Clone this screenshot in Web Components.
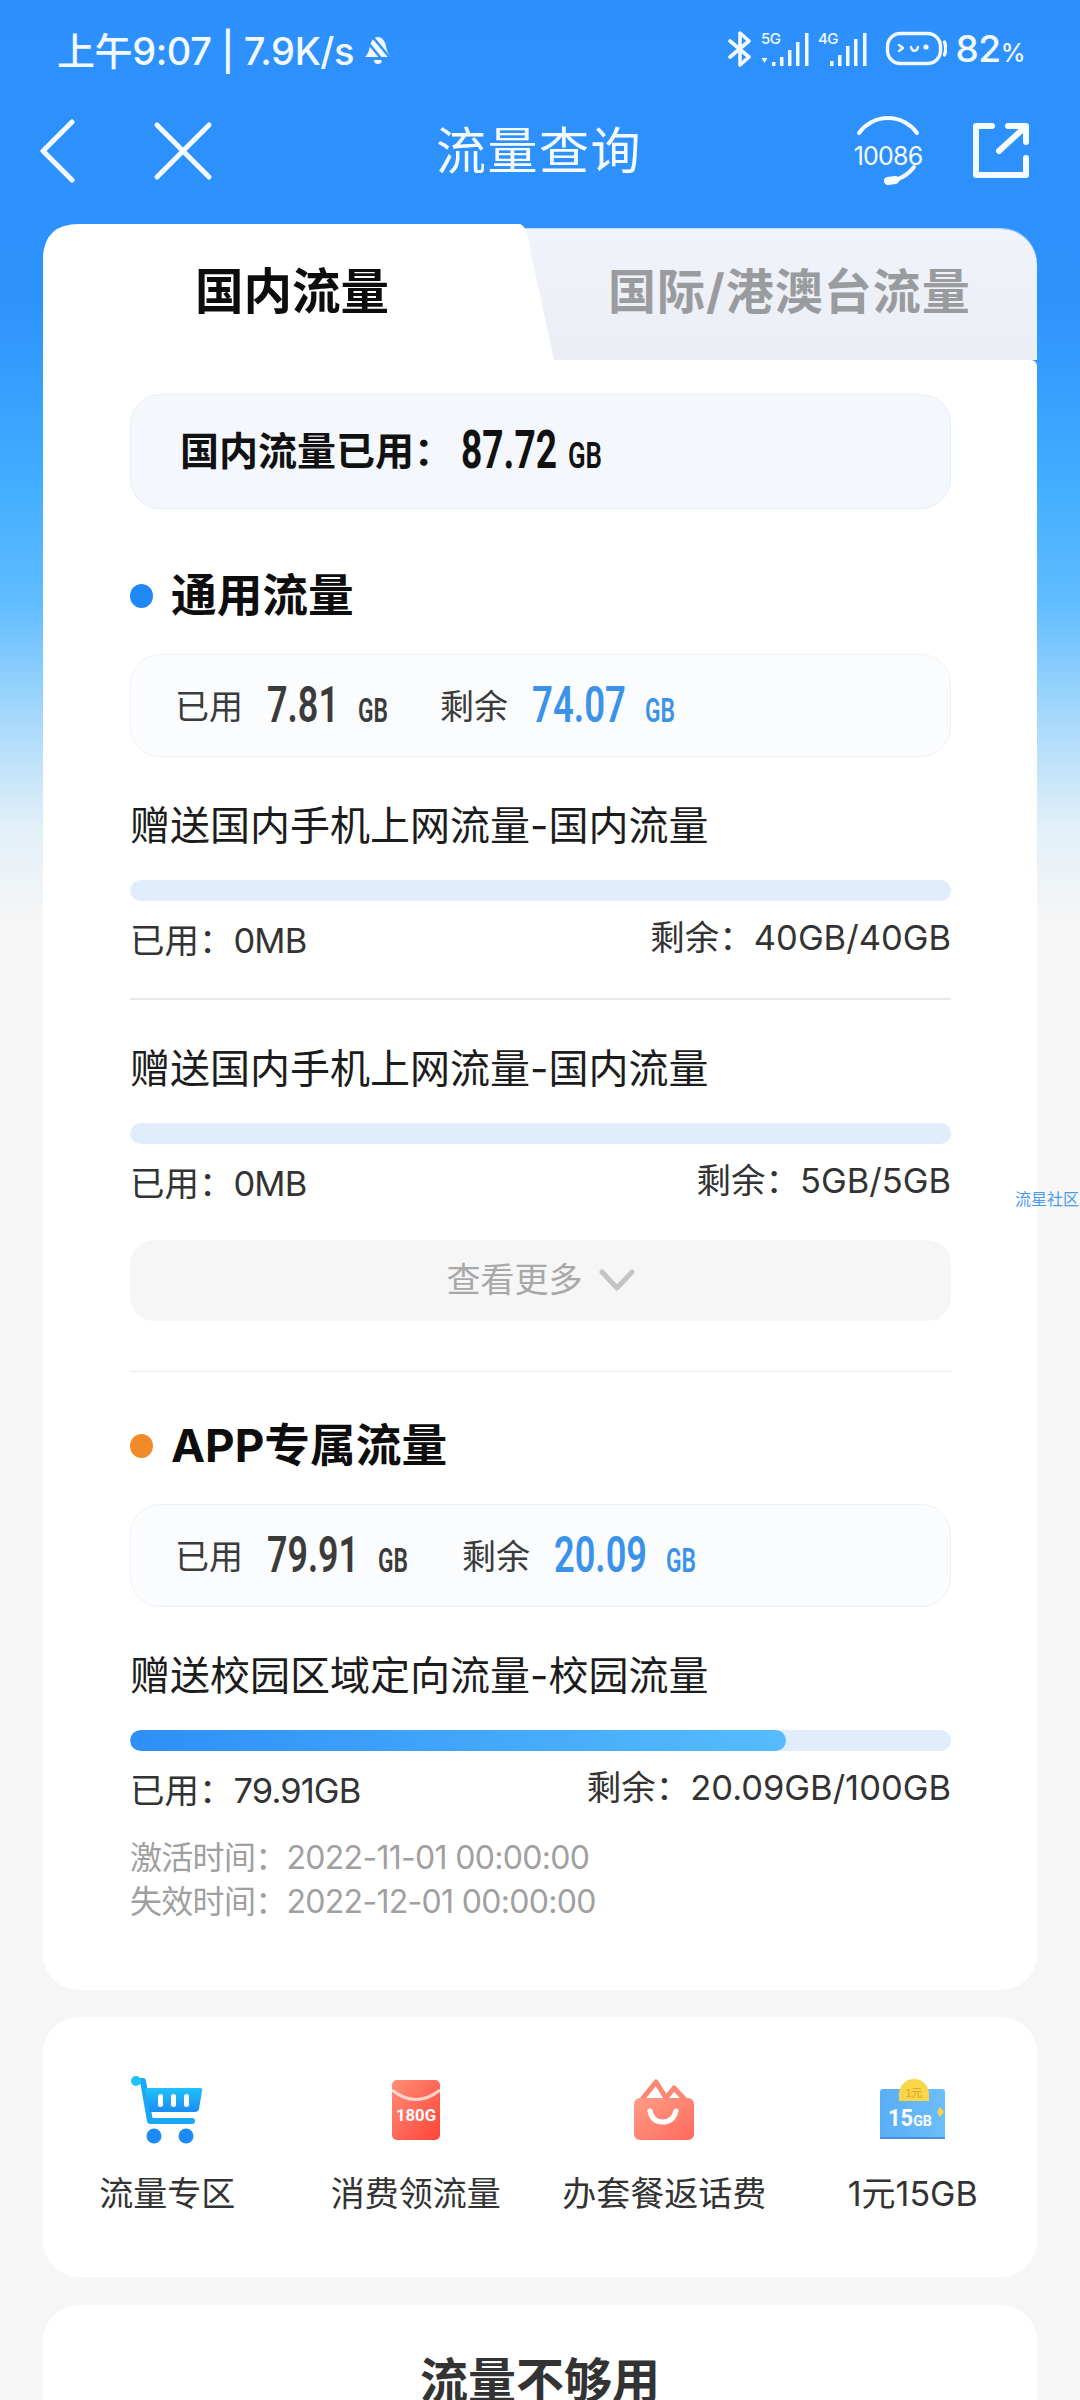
<!DOCTYPE html>
<html lang="zh"><head><meta charset="utf-8"><title>流量查询</title>
<style>
html,body{margin:0;height:2400px;overflow:hidden}
body{background:linear-gradient(180deg,#2d90fd 0,#2e92fd 300px,#41adff 480px,#5fbcff 600px,#a8d9fb 720px,#e3f0f8 830px,#f6f6f6 920px);font-family:Inter,"Noto Sans CJK SC",sans-serif;position:relative}
</style></head><body>
<page-shell>
<status-bar></status-bar>
<nav-bar></nav-bar>
<traffic-tabs></traffic-tabs>
<main-card>
  <summary-box></summary-box>
  <section-title color="#1f88f5">通用流量</section-title>
  <usage-box used="7.81" uw="72" left="74.07" lw="94" lm="52"></usage-box>
  <flow-item name="赠送国内手机上网流量-国内流量" used="0MB" rest="40GB/40GB" pct="0" line></flow-item>
  <flow-item name="赠送国内手机上网流量-国内流量" used="0MB" rest="5GB/5GB" pct="0"></flow-item>
  <more-button></more-button>
  <thin-rule></thin-rule>
  <section-title color="#f28a2a" class="app">APP专属流量</section-title>
  <usage-box used="79.91" uw="92" left="20.09" lw="93" lm="54"></usage-box>
  <flow-item name="赠送校园区域定向流量-校园流量" used="79.91GB" rest="20.09GB/100GB" pct="79.9"></flow-item>
  <date-lines></date-lines>
</main-card>
<quick-card></quick-card>
<more-card></more-card>
</page-shell>
<side-tag>流星社区</side-tag>
<script>
const def=(name,css,html)=>customElements.define(name,class extends HTMLElement{
  connectedCallback(){
    if(this.shadowRoot)return;
    const a=n=>this.getAttribute(n)??'';
    this.attachShadow({mode:'open'}).innerHTML=`<style>:host{box-sizing:border-box}*{box-sizing:border-box}${css}</style>${typeof html==='function'?html(a,this):html}`;
  }});
const CJK='Inter,"Noto Sans CJK SC",sans-serif';

/* condensed numerals: laid out at the measured width w, squeezed with scaleX */
customElements.define('din-num',class extends HTMLElement{
  connectedCallback(){
    if(this.shadowRoot)return;
    const s=this.getAttribute('s'),w=+this.getAttribute('w');
    const r=this.attachShadow({mode:'open'});
    r.innerHTML=`<style>:host{display:inline-block;width:${w}px;font:${this.getAttribute('fw')||600} ${s}px/1 Roboto,sans-serif;color:${this.getAttribute('c')||'inherit'};white-space:nowrap}
      span{display:inline-block;transform-origin:0 50%}</style><span><slot></slot></span>`;
    const sp=r.querySelector('span');
    sp.style.transform=`scaleX(${w/sp.getBoundingClientRect().width})`;
  }});

def('page-shell',`:host{display:block;width:1080px}`,`<slot></slot>`);

def('status-bar',`:host{display:flex;align-items:center;height:100px;padding:0 55px 3px 57px;color:#f2f9ff;font:500 38px ${CJK}}
 .t{letter-spacing:-.4px;white-space:nowrap}.l{display:flex;align-items:center;gap:9px;flex:1}
 .r{display:flex;align-items:center}
 .p{font-size:37px;letter-spacing:-.5px;margin-left:9px;white-space:nowrap}.p small{font-size:25px}
 svg{display:block}`,
`<div class="l"><span class="t">上午9:07 | 7.9K/s</span>
 <svg width="30" height="32" viewBox="0 0 30 32"><path d="M2 24c3-3 4-6 5-11 1-5 4-9 8-9s7 4 8 9c1 5 2 8 5 11z" fill="#f2f9ff"/><path d="M11 27a4 4 0 0 0 8 0z" fill="#f2f9ff"/><path d="M8 2 28 26M2 6 21 29" stroke="#2d90fd" stroke-width="2.4"/></svg></div>
 <div class="r">
 <svg width="26" height="38" viewBox="0 0 26 38" fill="none" stroke="#f2f9ff" stroke-width="3.6" stroke-linejoin="round" stroke-linecap="round"><path d="M3 11 22 27 13 35V3l9 8L3 27"/></svg>
 <svg width="52" height="38" viewBox="0 0 52 38" style="margin-left:8px" fill="#f2f9ff"><text x="0" y="14" font-size="15" font-family="Inter" font-weight="500" letter-spacing="-.5">5G</text><path d="M.500 28h6l-3 5z"/><rect x="11" y="32" width="3.500" height="4"/><rect x="19" y="27" width="3.500" height="9"/><rect x="27" y="20" width="3.500" height="16"/><rect x="35" y="12" width="3.500" height="24"/><rect x="44" y="3" width="3.500" height="33"/></svg>
 <svg width="52" height="38" viewBox="0 0 52 38" style="margin-left:5px" fill="#f2f9ff"><text x="0" y="14" font-size="15" font-family="Inter" font-weight="500" letter-spacing="-.5">4G</text><rect x="12" y="31" width="3.500" height="5"/><rect x="20" y="25" width="3.500" height="11"/><rect x="28" y="16" width="3.500" height="20"/><rect x="36" y="9" width="3.500" height="27"/><rect x="45" y="3" width="3.500" height="33"/></svg>
 <svg width="62" height="38" viewBox="0 0 62 38" style="margin-left:15px" fill="none" stroke="#f2f9ff" stroke-width="3.400"><rect x="2.500" y="3.500" width="53" height="30" rx="13"/><path d="M59.500 12c1.500 4 1.500 9 0 13" stroke-linecap="round"/><path d="M14 15l4 3-4 3M26 17c.8 5 6 5 7 0" stroke-width="2.400" stroke-linecap="round" stroke-linejoin="round"/><circle cx="41" cy="17" r="2.600" fill="#f2f9ff" stroke="none"/></svg>
 <span class="p">82<small>%</small></span></div>`);

def('nav-bar',`:host{display:grid;grid-template-columns:1fr auto 1fr;align-items:center;height:124px;padding:0 48px 22px 40px;color:#f6fbff}
 .l,.r{display:flex;align-items:center}.r{justify-content:flex-end;gap:44px}.l{gap:77px}
 h1{margin:0 0 0 6px;font:400 50px/60px ${CJK};letter-spacing:1.500px}svg{display:block}`,
`<div class="l"><svg width="36" height="66" viewBox="0 0 36 66" fill="none" stroke="#f6fbff" stroke-width="5" stroke-linecap="round" stroke-linejoin="round"><path d="M32 4 3 33 32 62"/></svg>
 <svg width="60" height="60" viewBox="0 0 60 60" stroke="#f6fbff" stroke-width="5" stroke-linecap="round"><path d="M4 4 56 56M56 4 4 56"/></svg></div>
 <h1>流量查询</h1>
 <div class="r"><svg width="76" height="72" viewBox="0 0 76 72" fill="none" stroke="#f6fbff" stroke-width="4" stroke-linecap="round"><path d="M9 18A35.500 35.500 0 0 1 67 18M64 52A35.500 35.500 0 0 1 45 65"/><path d="M38 66 45 65" stroke-width="8"/><text x="38" y="50" text-anchor="middle" font-size="25" font-family="Inter" fill="#f6fbff" stroke="none" letter-spacing="-.8">10086</text></svg>
 <svg width="62" height="62" viewBox="0 0 62 62" fill="none" stroke="#f6fbff" stroke-width="6" stroke-linejoin="round" stroke-linecap="round"><path d="M22 6H6V55H56V38M38 6H56V22M54 8 29 31"/></svg></div>`);

def('traffic-tabs',`:host{display:block;position:relative;width:994px;height:136px;margin-left:43px}
 .g{position:absolute;inset:5px 0 0 0;background:linear-gradient(#f0f3f9,#ebeef5);border-radius:30px 36px 0 0;box-shadow:0 -1px 0 #b7dbf6}
 svg{position:absolute;left:0;top:0}
 .row{position:relative;display:flex;align-items:center;height:136px;font:700 48px/60px ${CJK};white-space:nowrap}
 .a{margin-left:152px;font-size:48.500px;color:#0d0d0d}.b{margin-left:219px;color:#9a9b9e;letter-spacing:1px}`,
`<div class="g"></div><svg width="994" height="136" viewBox="0 0 994 136"><path d="M0 136V36Q0 0 36 0H477Q485 2 488 30L511 136Z" fill="#fff"/></svg>
 <div class="row"><span class="a">国内流量</span><span class="b">国际/港澳台流量</span></div>`);

def('main-card',`:host{display:flex;flex-direction:column;width:994px;margin-left:43px;padding:34px 86px 66px 87px;background:#fff;border-radius:0 6px 36px 36px}`,`<slot></slot>`);

def('summary-box',`:host{display:block;height:115px;padding:0 0 0 49px;background:#f4f8fd;border:1.5px solid #e6eef7;border-radius:30px;font:700 39px/112px ${CJK};color:#111;white-space:nowrap}
 din-num{vertical-align:-3px}`,
`国内流量已用：<din-num s="53" w="96" style="margin-left:8px" fw="700">87.72</din-num><din-num s="37" w="34" style="margin-left:11px">GB</din-num>`);

def('section-title',`:host{display:flex;align-items:center;height:60px;margin-top:57px;font:700 45.700px/60px ${CJK};color:#0d0d0d;white-space:nowrap}
 :host(.app){margin-top:44px}
 i{width:23px;height:24px;border-radius:50%;margin-right:18px;flex:none}`,
 a=>`<i style="background:${a('color')}"></i><slot></slot>`);

def('usage-box',`:host{display:block;height:103px;margin-top:28px;padding-left:44px;background:#fafcfe;border:1.5px solid #eef2f7;border-radius:30px;font:400 34px/103px ${CJK};color:#3b3b3b;white-space:nowrap}
 din-num{vertical-align:-3px}.v{margin-left:24px}.u{margin-left:19px}`,
 a=>`<span>已用</span><din-num class="v" s="50" w="${a('uw')}" c="#3b3b3b">${a('used')}</din-num><din-num class="u" s="33" w="30" c="#3b3b3b">GB</din-num><span style="margin-left:${a('lm')}px">剩余</span><din-num class="v" s="50" w="${a('lw')}" c="#3a93e8">${a('left')}</din-num><din-num class="u" s="33" w="30" c="#3a93e8">GB</din-num>`);

def('flow-item',`:host{display:block;padding-top:39px}
 .n{font:400 40px/60px ${CJK};color:#1c1c1c;white-space:nowrap}
 .b{height:21px;margin-top:24px;border-radius:11px;background:#e1edfb;overflow:hidden}
 .f{height:100%;border-radius:11px;background:linear-gradient(90deg,#2d8ff8,#55bdfd)}
 .t{display:flex;justify-content:space-between;margin-top:15px;font:400 34.500px/50px ${CJK};color:#333;white-space:nowrap}
 .t b{font-weight:400;letter-spacing:-.9px}
 .t span:last-child b{letter-spacing:0}
 .t span:last-child{position:relative;top:-3px}
 .h{height:1.500px;margin-top:32px;background:#e9e9eb}`,
 (a,t)=>`<div class="n">${a('name')}</div><div class="b"><div class="f" style="width:${a('pct')}%"></div></div>
 <div class="t"><span>已用：<b>${a('used')}</b></span><span>剩余：<b>${a('rest')}</b></span></div>${t.hasAttribute('line')?'<div class="h"></div>':''}`);

def('more-button',`:host{display:flex;align-items:center;justify-content:center;gap:16px;height:81px;margin-top:31px;background:#f6f6f6;border-radius:24px;font:400 34px/60px ${CJK};color:#a8a8a8}
 svg{display:block}`,`查看更多<svg width="36" height="22" viewBox="0 0 36 22" fill="none" stroke="#c4c4c4" stroke-width="5" stroke-linecap="round" stroke-linejoin="round"><path d="M3 3 18 19 33 3"/></svg>`);

def('thin-rule',`:host{display:block;height:1.500px;margin-top:50px;background:#e9e9eb}`,``);

def('date-lines',`:host{display:block;margin-top:20px;font:400 32px/44px ${CJK};color:#a0a0a0;white-space:nowrap;letter-spacing:-.7px}`,
 `<div>激活时间：2022-11-01 00:00:00</div><div>失效时间：2022-12-01 00:00:00</div>`);

def('quick-link',`:host{display:flex;flex-direction:column;align-items:center;font:400 34px/50px ${CJK};color:#333;white-space:nowrap}
 .i{height:70px;margin-bottom:24px;display:flex;align-items:center;justify-content:center}`,
 `<div class="i"><slot name="icon"></slot></div><slot></slot>`);

def('quick-card',`:host{display:grid;grid-template-columns:repeat(4,1fr);width:994px;height:260px;margin:27px 0 0 43px;padding-top:58px;background:#fff;border-radius:36px}`,
`<quick-link>流量专区<svg slot="icon" width="74" height="70" viewBox="0 0 74 70"><defs><linearGradient id="c" x1="0" y1="0" x2="0" y2="1"><stop offset="0" stop-color="#1fc3f9"/><stop offset="1" stop-color="#1b8bf4"/></linearGradient></defs><path d="M6 6H13L20 46H62" fill="none" stroke="#1ba6f6" stroke-width="6" stroke-linecap="round" stroke-linejoin="round"/><circle cx="6" cy="6" r="5" fill="#1fc3f9"/><path d="M15 13H70Q73 13 72 16L69 34Q68 37 65 37H20Z" fill="url(#c)"/><rect x="28" y="19" width="5" height="13" rx="2.500" fill="#fff"/><rect x="41" y="19" width="5" height="13" rx="2.500" fill="#fff"/><rect x="54" y="19" width="5" height="13" rx="2.500" fill="#fff"/><circle cx="24" cy="61" r="7.500" fill="#1b8bf4"/><circle cx="56" cy="61" r="7.500" fill="#1b8bf4"/></svg></quick-link>
<quick-link>消费领流量<svg slot="icon" width="50" height="62" viewBox="0 0 50 62"><defs><linearGradient id="r" x1="0" y1="0" x2="1" y2="1"><stop offset="0" stop-color="#ff8e78"/><stop offset="1" stop-color="#ff4438"/></linearGradient></defs><rect x="1" y="1" width="48" height="60" rx="5" fill="url(#r)"/><path d="M1 11Q25 30 49 11" fill="none" stroke="#fbd6cb" stroke-width="3"/><text x="25" y="42" text-anchor="middle" font-size="16" font-weight="700" font-family="Roboto" fill="#fff" textLength="40" lengthAdjust="spacingAndGlyphs">180G</text></svg></quick-link>
<quick-link>办套餐返话费<svg slot="icon" width="62" height="62" viewBox="0 0 62 62"><defs><linearGradient id="b" x1="0" y1="0" x2="1" y2="1"><stop offset="0" stop-color="#ff9d86"/><stop offset="1" stop-color="#ff6a5c"/></linearGradient></defs><path d="M6 24 23 3 33 19 41 9 55 24" fill="none" stroke="#fb8672" stroke-width="5" stroke-linejoin="round"/><rect x="1" y="19" width="60" height="42" rx="6" fill="url(#b)"/><path d="M18 33Q20 44 31 44Q41 44 44 33" fill="none" stroke="#fff" stroke-width="5" stroke-linecap="round" transform="translate(-1 -1)"/></svg></quick-link>
<quick-link>1元15GB<svg slot="icon" width="66" height="62" viewBox="0 0 66 62"><defs><linearGradient id="k" x1="0" y1="0" x2="1" y2="0"><stop offset="0" stop-color="#5aaef6"/><stop offset="1" stop-color="#6cbdfb"/></linearGradient></defs><rect x="0" y="10" width="65" height="50" rx="3" fill="url(#k)"/><rect x="0" y="58" width="65" height="2" fill="#4a90d8"/><path d="M19 22V15A15 15 0 0 1 49 15V22Z" fill="#f8d64a"/><text x="34" y="18" text-anchor="middle" font-size="11" font-family="Noto Sans CJK SC" fill="#e89a24">1元</text><text x="8" y="47" font-size="23" font-weight="700" font-family="Roboto" fill="#fff" textLength="44" lengthAdjust="spacingAndGlyphs">15<tspan font-size="15">GB</tspan></text><path d="M60 28l4 5-4 5-3-5z" fill="#f8d64a"/></svg></quick-link>`);

def('more-card',`:host{display:block;width:994px;height:400px;margin:28px 0 0 43px;padding-top:46px;background:#fff;border-radius:36px 36px 0 0;text-align:center;font:700 48px/60px ${CJK};color:#333}`,`流量不够用`);

def('side-tag',`:host{position:absolute;left:1015px;top:1189px;width:65px;overflow:hidden;white-space:nowrap;font:400 16px/20px ${CJK};color:#4b9bea}`,`<slot></slot>`);
</script>
</body></html>
